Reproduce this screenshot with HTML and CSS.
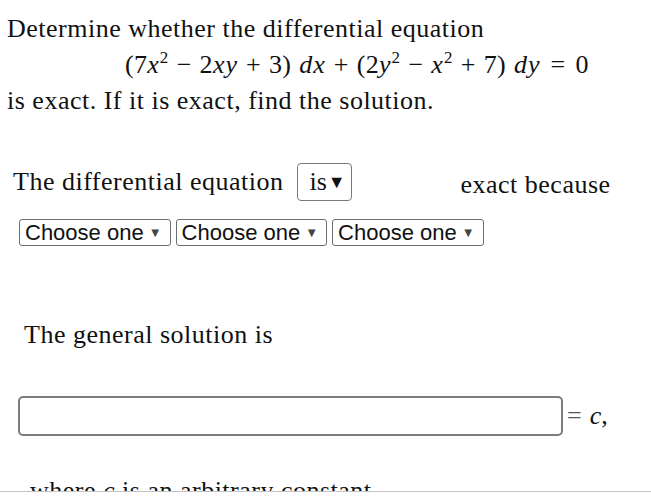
FILE: index.html
```html
<!DOCTYPE html>
<html>
<head>
<meta charset="utf-8">
<link rel="stylesheet" href="styles.css">
</head>
<body>
<div class="page">
  <div class="intro">
    <div class="line">Determine whether the differential equation</div>
    <div class="eq">(7<i>x</i><sup>2</sup><span class="op">−</span>2<i>xy</i><span class="op">+</span>3)<span class="sp"></span><i>dx</i><span class="op">+</span>(2<i>y</i><sup>2</sup><span class="op">−</span><i>x</i><sup>2</sup><span class="op">+</span>7)<span class="sp"></span><i>dy</i><span class="rel">=</span>0</div>
    <div class="line">is exact. If it is exact, find the solution.</div>
  </div>
  <div class="q1">
    <span class="lbl">The differential equation</span>
    <span class="is-sel">is<span class="tri">▼</span></span>
    <span class="exact">exact because</span>
  </div>
  <div class="chooses">
    <span class="choose">Choose one <span class="caret">▼</span></span>
    <span class="choose">Choose one <span class="caret">▼</span></span>
    <span class="choose">Choose one <span class="caret">▼</span></span>
  </div>
  <div class="general">The general solution is</div>
  <div class="answer">
    <span class="box"></span>
    <span class="eqc"><span class="eqsign">=</span><i>c</i>,</span>
  </div>
  <div class="where">where <i>c</i> is an arbitrary constant.</div>
</div>
</body>
</html>
```
FILE: styles.css
```css
html, body { margin: 0; padding: 0; background: #fff; }
body { font-family: "Liberation Serif", serif; color: #111; }
.page { height: 491px; overflow: hidden; border-bottom: 1px solid #c4c4c4; }
.intro { padding: 12px 0 0 7px; font-size: 26px; letter-spacing: 0.5px; }
.line { line-height: 34px; }
.eq { line-height: 38px; padding-left: 118px; letter-spacing: 0.3px; }
.eq i { letter-spacing: 1px; }
.eq sup { font-size: 17px; vertical-align: 10px; line-height: 0; }
.op { margin: 0 8px; }
.rel { margin: 0 10px; }
.sp { display: inline-block; width: 8px; }
.q1 { display: flex; align-items: center; margin-top: 45px; padding-left: 13px; font-size: 26px; letter-spacing: 0.5px; height: 38px; }
.is-sel { margin-left: 14px; border: 1px solid #7a7a7a; border-radius: 4px; display: flex; align-items: center; padding-left: 11px; box-sizing: border-box; width: 55px; height: 38px; letter-spacing: 0; }
.tri { font-size: 18px; margin-left: 1px; }
.exact { margin-left: 108px; margin-top: 6px; }
.chooses { display: flex; gap: 5px; padding-left: 19px; margin-top: 18px; }
.choose { font-family: "Liberation Sans", Arial, sans-serif; font-size: 22px; height: 27px; box-sizing: border-box; border: 1px solid #6e6e6e; border-radius: 3px; padding: 0 8px 0 5px; display: flex; align-items: center; color: #111; }
.caret { font-size: 13px; margin-left: 5px; color: #444; }
.general { padding-left: 24px; font-size: 26px; letter-spacing: 0.5px; margin-top: 74px; }
.answer { display: flex; align-items: center; padding-left: 18px; margin-top: 46px; }
.box { width: 545px; height: 40px; box-sizing: border-box; border: 2px solid #7c7c7c; border-radius: 5px; }
.eqc { font-size: 26px; margin-left: 4px; }
.eqsign { color: #555; margin-right: 8px; }
.where { padding-left: 30px; font-size: 26px; letter-spacing: 0.5px; margin-top: 40px; }
```
